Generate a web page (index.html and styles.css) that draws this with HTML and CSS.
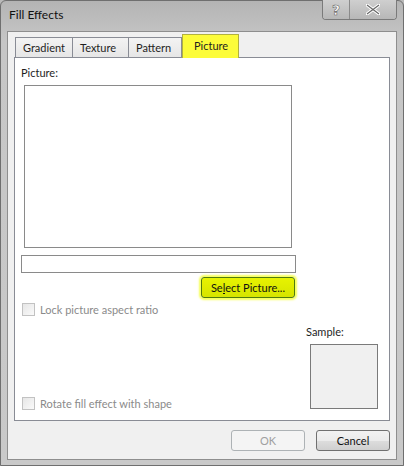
FILE: index.html
```html
<!DOCTYPE html>
<html>
<head>
<meta charset="utf-8">
<link rel="stylesheet" href="styles.css">
</head>
<body>
<div class="window">
  <div class="titlebar">
    <span class="title">Fill Effects</span>
    <div class="caption-btns">
      <div class="cbtn help">?</div>
      <div class="cbtn close">
        <svg width="14" height="11" viewBox="0 0 14 11"><path d="M1 1 L13 10 M13 1 L1 10" stroke="#fff" stroke-width="3.2" stroke-linecap="square"/><path d="M1 1 L13 10 M13 1 L1 10" stroke="#6a6a6a" stroke-width="1.2"/></svg>
      </div>
    </div>
  </div>
  <div class="client">
    <div class="tabs">
      <div class="tab">Gradient</div>
      <div class="tab">Texture</div>
      <div class="tab">Pattern</div>
      <div class="tab active">Picture</div>
    </div>
    <div class="panel">
      <div class="label">Picture:</div>
      <div class="picbox"></div>
      <div class="namefield"></div>
      <div class="btnrow"><div class="selbtn">Se<u>l</u>ect Picture...</div></div>
      <div class="lower">
        <div class="leftcol">
          <div class="check"><span class="box"></span>Lock picture aspect ratio</div>
          <div class="check"><span class="box"></span>Rotate fill effect with shape</div>
        </div>
        <div class="rightcol">
          <div class="samplelabel">Sample:</div>
          <div class="sample"></div>
        </div>
      </div>
    </div>
    <div class="footer">
      <div class="btn disabled">OK</div>
      <div class="btn">Cancel</div>
    </div>
  </div>
</div>
</body>
</html>
```
FILE: styles.css
```css
* { box-sizing: border-box; }
html, body { margin: 0; padding: 0; }
body {
  width: 404px; height: 466px; overflow: hidden;
  font-family: "Lato", "Open Sans", sans-serif;
  font-size: 11px; color: #1e1e1e;
  background: #b9b9b9;
}
.window {
  width: 404px; height: 466px;
  background: linear-gradient(to bottom, #b4b4b4 0px, #c6c6c6 40px, #c9c9c9 100%);
  border: 1px solid #6f6f6f;
  border-radius: 6px 6px 0 0;
  padding: 0 6px 5px 6px;
  display: flex; flex-direction: column;
}
.titlebar {
  height: 30px; flex: none;
  display: flex; align-items: flex-start; justify-content: space-between;
}
.title {
  font-size: 12px; color: #111; margin-top: 6px; margin-left: 2px;
}
.caption-btns {
  display: flex; margin-top: -1px;
  border: 1px solid #7a7a7a; border-top: none;
  border-radius: 0 0 4px 4px;
  box-shadow: inset 0 0 0 1px rgba(255,255,255,0.45);
  overflow: hidden;
}
.cbtn {
  height: 19px; display: flex; align-items: center; justify-content: center;
  background: linear-gradient(to bottom, #cfcfcf, #b7b7b7);
}
.help {
  width: 27px; border-right: 1px solid #8a8a8a;
  color: #fff; font-weight: bold;
  font-family: "DejaVu Sans", sans-serif; font-size: 14px;
  -webkit-text-stroke: 0.6px #666;
  padding-top: 1px;
}
.close { width: 46px; }
.client {
  flex: 1;
  background: #f0f0f0;
  border: 1px solid #8e8e8e;
  display: flex; flex-direction: column;
  padding: 0 6px 0 6px;
}
.tabs {
  display: flex; padding-left: 1px; margin-top: 4px; height: 21px;
  align-items: flex-end;
}
.tab {
  height: 20px; padding: 0 7px;
  display: flex; align-items: center;
  border: 1px solid #898c95; border-bottom: none;
  background: linear-gradient(to bottom, #f3f3f3, #e6e6e6);
  margin-right: -1px;
  color: #1e1e1e;
}
.tab:nth-child(1) { width: 58px; }
.tab:nth-child(2) { width: 57px; }
.tab:nth-child(3) { width: 54px; }
.tab.active {
  width: 57px; height: 24px; margin-top: -3px;
  background: #fcfc3a;
  border-color: #b0b040;
  padding-left: 11px; padding-bottom: 2px;
  position: relative; z-index: 2; margin-bottom: -1px; margin-left: 1px;
}
.panel {
  height: 364px;
  background: #fff;
  border: 1px solid #898c95;
  padding: 8px 0 0 6px;
  display: flex; flex-direction: column;
}
.label { height: 18px; }
.picbox {
  margin-left: 3px; margin-top: 1px;
  width: 268px; height: 163px;
  border: 1px solid #8a8a8a;
}
.namefield {
  margin-top: 7px; width: 275px; height: 18px;
  border: 1px solid #8a8a8a;
}
.btnrow { width: 274px; display: flex; justify-content: flex-end; margin-top: 4px; }
.selbtn {
  width: 94px; height: 21px;
  display: flex; align-items: center; justify-content: center;
  background: linear-gradient(to bottom, #e7f300, #d6e400);
  border: 1px solid #4f7a10;
  border-radius: 3px;
  box-shadow: 0 0 2px 2px #f6ff5a;
  color: #111;
}
.selbtn u { text-decoration: none; border-bottom: 1px solid #111; line-height: 11px; }
.lower {
  flex: 1; display: flex; justify-content: space-between;
  padding-bottom: 10px;
}
.leftcol {
  display: flex; flex-direction: column; justify-content: space-between;
  padding-top: 4px; padding-left: 1px;
}
.check {
  display: flex; align-items: center; color: #8a8a8a; height: 14px;
}
.box {
  width: 13px; height: 13px; border: 1px solid #c2c2c2;
  background: linear-gradient(135deg, #e6e6e6, #fafafa);
  margin-right: 5px;
}
.rightcol {
  width: 79px; padding-top: 27px;
}
.samplelabel { height: 16px; margin-left: -4px; }
.sample {
  margin-top: 3px;
  width: 68px; height: 65px;
  background: #f0f0f0; border: 1px solid #7a7a7a;
}
.footer {
  display: flex; justify-content: flex-end; gap: 11px;
  margin-top: 9px;
}
.btn {
  width: 74px; height: 21px;
  display: flex; align-items: center; justify-content: center;
  border: 1px solid #707070; border-radius: 3px;
  background: linear-gradient(to bottom, #f2f2f2 0%, #ebebeb 50%, #dddddd 51%, #cfcfcf 100%);
  color: #111;
}
.btn.disabled {
  border-color: #adb2b5; background: #f4f4f4; color: #a0a0a0;
}
```
